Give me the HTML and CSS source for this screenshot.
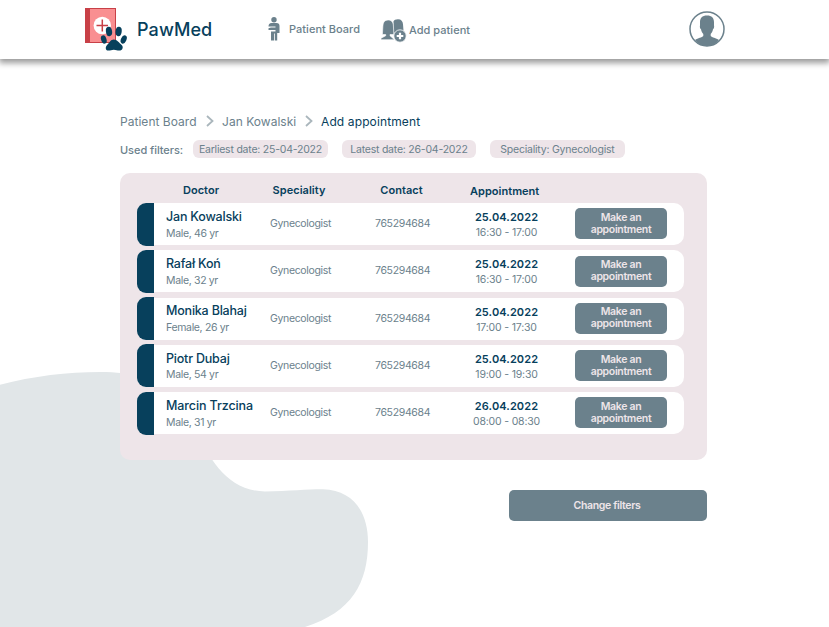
FILE: index.html
```
<!DOCTYPE html>
<html lang="en">
<head>
<meta charset="utf-8">
<title>PawMed</title>
<link rel="stylesheet" href="styles.css">
</head>
<body>
<svg class="blob" width="380" height="267" viewBox="0 360 380 267" aria-hidden="true"><path d="M0 384.800C33 376 68 372 100 372C165 372 190 402 200 432C207 458 228 491 265 491.500C290 491 310 489 323 489.200C353 490 368 512 368 542C368 583 352 612 305 627H0Z"/></svg>
<header class="topbar">
  <a class="brand">
    <svg width="44" height="46" viewBox="84 7 44 46"><rect x="85" y="8" width="31" height="35" fill="#c84047"/><rect x="90" y="9" width="25" height="33" fill="#f98f91"/><circle cx="102.300" cy="25.500" r="8.700" fill="#fff"/><path d="M102.300 19.500v12M96.500 25.500h11.500" stroke="#c84047" stroke-width="1.500"/><g fill="#07405c"><ellipse cx="109" cy="31.500" rx="3.100" ry="4.700" transform="rotate(-8 109 31.500)"/><ellipse cx="118.600" cy="31.500" rx="3.100" ry="4.700" transform="rotate(8 118.600 31.500)"/><ellipse cx="103.800" cy="39.500" rx="2.700" ry="4.300" transform="rotate(-18 103.800 39.500)"/><ellipse cx="123.700" cy="39.500" rx="2.700" ry="4.300" transform="rotate(25 123.700 39.500)"/><path d="M113.800 39.500c-3.200 0-4.300 3.200-6.300 5-2.600 2.300-2.200 6 .7 6.100 2.200.1 3.200-.8 5.600-.8s3.600.9 5.600.8c3-.1 4.500-3.600 2.200-5.700-2.500-2.200-4.400-5.400-7.800-5.400z"/></g></svg>
    <span>PawMed</span>
  </a>
  <a class="nav board">
    <svg width="14" height="26" viewBox="267 16 14 26"><circle cx="274" cy="19.700" r="2.700"/><path d="M271.500 23h5q3 0 3 3v7h-2.300v7.500h-2.400V33.500h-.8v7H271V31.500h4.500v-1.400h-7V28.300l2.500-.9h4.500v-.9h-7c0-2 1-3.500 3-3.500z"/></svg>
    <span>Patient Board</span>
  </a>
  <a class="nav add">
    <svg width="27" height="25" viewBox="380 18 27 25"><path d="M393.500 21.300c.6-1.200 2-2.100 4.500-2.100 3.300 0 4.800 2 5 5l.5 6.500-5.500 2h-4.500z"/><path stroke="#fff" stroke-width=".6" d="M382.400 34.500l.5-8.500c.2-4 2-6 5.200-6s5.100 2 5.300 6l.5 8.500H390v1.300l4.500 3.900H381v-1.500l4.700-2.400v-1.300z"/><circle cx="400" cy="36" r="6.200" stroke="#fff" stroke-width=".8"/><path d="M400 32.700v6.600M396.700 36h6.600" stroke="#fff" stroke-width="2.200"/></svg>
    <span>Add patient</span>
  </a>
  <svg class="avatar" width="36" height="36" viewBox="0 0 36 36"><circle cx="18" cy="18" r="17" fill="#fff" stroke="#6b818c" stroke-width="1.500"/><path d="M18 4.500c-4.800 0-7 2.700-7 6.700v3c-.5 2 .2 3.400 1 4 .4 2.200 1.200 3.600 2.300 4.700v2.200c-1.300 1.600-5.300 1.900-8.300 3.800 3 4 7 6.100 12 6.100s9-2.100 12-6.100c-3-1.900-7-2.200-8.300-3.800v-2.200c1.100-1.100 1.900-2.500 2.300-4.700.8-.6 1.500-2 1-4v-3c0-4-2.200-6.700-7-6.700z" fill="#6b818c"/></svg>
</header>
<main>
  <nav class="crumbs">
    <span class="c1">Patient Board</span>
    <svg width="8" height="12" viewBox="0 0 8 12"><path d="M1 1l5.500 5L1 11"/></svg>
    <span class="c2">Jan Kowalski</span>
    <svg width="8" height="12" viewBox="0 0 8 12"><path d="M1 1l5.500 5L1 11"/></svg>
    <span class="current">Add appointment</span>
  </nav>
  <div class="filters">
    <span class="label">Used filters:</span>
    <span class="chip">Earliest date: 25-04-2022</span>
    <span class="chip">Latest date: 26-04-2022</span>
    <span class="chip">Speciality: Gynecologist</span>
  </div>
  <section class="panel">
    <div class="heads"><span>Doctor</span><span>Speciality</span><span>Contact</span><span class="low">Appointment</span></div>
    <div class="rows">
      <article class="row"><div class="who"><b>Jan Kowalski</b><small>Male, 46 yr</small></div><span class="info">Gynecologist</span><span class="info">765294684</span><div class="when"><b>25.04.2022</b><small>16:30 - 17:00</small></div><button>Make an appointment</button></article>
      <article class="row"><div class="who"><b>Rafał Koń</b><small>Male, 32 yr</small></div><span class="info">Gynecologist</span><span class="info">765294684</span><div class="when"><b>25.04.2022</b><small>16:30 - 17:00</small></div><button>Make an appointment</button></article>
      <article class="row"><div class="who"><b>Monika Blahaj</b><small>Female, 26 yr</small></div><span class="info">Gynecologist</span><span class="info">765294684</span><div class="when"><b>25.04.2022</b><small>17:00 - 17:30</small></div><button>Make an appointment</button></article>
      <article class="row"><div class="who"><b>Piotr Dubaj</b><small>Male, 54 yr</small></div><span class="info">Gynecologist</span><span class="info">765294684</span><div class="when"><b>25.04.2022</b><small>19:00 - 19:30</small></div><button>Make an appointment</button></article>
      <article class="row"><div class="who"><b>Marcin Trzcina</b><small>Male, 31 yr</small></div><span class="info">Gynecologist</span><span class="info">765294684</span><div class="when"><b>26.04.2022</b><small>08:00 - 08:30</small></div><button>Make an appointment</button></article>
    </div>
  </section>
  <button class="change">Change filters</button>
</main>
</body>
</html>
```
FILE: styles.css
```
* { box-sizing: border-box; }
body { margin: 0; height: 627px; overflow: hidden; background: #fff; color: #6b818c; font-family: Inter, "Liberation Sans", sans-serif; font-size: 11px; position: relative; }
.blob { position: absolute; left: 0; bottom: 0; z-index: -1; fill: #e1e6e8; }
.topbar { height: 59px; background: #fff; box-shadow: 0 3px 6px 1px rgba(0,0,0,.4); display: flex; align-items: flex-start; padding-left: 84px; white-space: nowrap; }
.topbar svg { display: block; flex: none; }
.brand { display: flex; width: 183px; padding-top: 7px; gap: 9px; color: #07405c; font-size: 18px; font-weight: 500; line-height: 46px; letter-spacing: .1px; }
.nav { display: flex; fill: #6b818c; font-weight: 500; letter-spacing: .03px; }
.board { width: 113px; padding-top: 16px; gap: 8px; line-height: 26px; }
.add { padding-top: 18px; gap: 2px; line-height: 25px; width: 309px; }
.avatar { margin-top: 11px; }
main { width: 587px; margin-left: 120px; padding-top: 53px; display: flex; flex-direction: column; }
.crumbs { display: flex; align-items: center; height: 18px; font-size: 12px; letter-spacing: .03px; white-space: nowrap; }
.crumbs svg { fill: none; stroke: #aab6bc; stroke-width: 1.8; margin-right: 8px; }
.c1 { width: 86px; }
.c2 { width: 83px; }
.current { color: #07405c; letter-spacing: .12px; }
.filters { display: flex; height: 18px; margin-top: 10px; white-space: nowrap; }
.label { width: 73.300px; font-weight: 500; line-height: 20px; letter-spacing: -.05px; }
.chip { width: 134.300px; margin-right: 14.200px; background: #eee5e9; border-radius: 6px; text-align: center; font-size: 10.500px; line-height: 19px; letter-spacing: -.22px; }
.panel { height: 287px; margin-top: 15px; padding-left: 17px; background: #eee5e9; border-radius: 10px; }
.heads { display: grid; grid-template-columns: 128px 68px 137px 69px; height: 30px; padding-top: 8px; color: #07405c; font-weight: 600; line-height: 18px; text-align: center; letter-spacing: .03px; }
.low { padding-top: 1px; }
.rows { display: grid; row-gap: 5.250px; }
.row { position: relative; width: 547px; height: 42px; padding-left: 29px; background: #fff; border-radius: 10px; display: grid; grid-template-columns: 104px 105px 94px 75px 92px; align-items: center; white-space: nowrap; font-size: 10.500px; letter-spacing: -.34px; }
.row::before { content: ""; position: absolute; left: 0; top: -.5px; width: 17px; height: 43px; background: #07405c; border-radius: 9px 0 0 9px; }
.row b, .row small { display: block; line-height: 16px; }
.row small { font-size: 10.500px; }
.who { padding-top: 2.500px; }
.who b { color: #07405c; font-size: 12.500px; font-weight: 500; letter-spacing: -.2px; }
.row:last-child .who b { letter-spacing: -.1px; }
.who small { padding-top: .7px; }
.info { padding-bottom: 1px; }
.when { padding-top: 2px; text-align: center; }
.when b { color: #07405c; font-size: 11px; font-weight: 600; letter-spacing: .1px; }
.when small { letter-spacing: -.18px; }
button { padding: 0; border: 0; border-radius: 5px; background: #6b818c; color: #eee5e9; font-family: inherit; font-size: 10.500px; font-weight: 600; line-height: 12px; letter-spacing: -.33px; }
.row button { width: 92px; height: 31px; margin: 0 0 .5px 31px; white-space: normal; }
.change { width: 198px; height: 31px; margin-top: 30px; padding-right: 2px; align-self: flex-end; }
```
